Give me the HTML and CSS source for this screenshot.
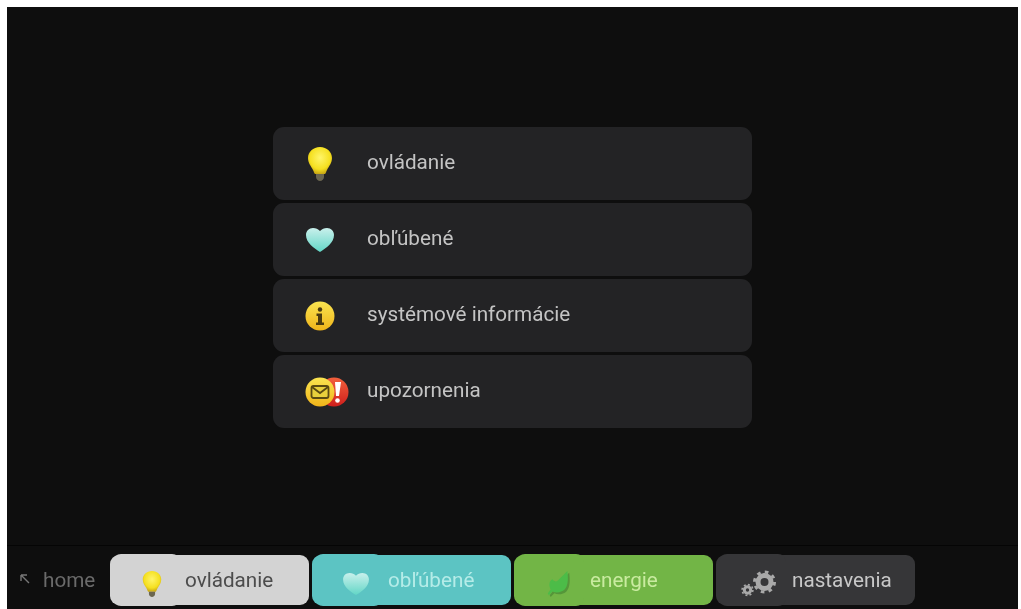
FILE: index.html
```html
<!DOCTYPE html>
<html lang="en">

<head>
    <meta charset="UTF-8">
    <meta name="viewport" content="width=device-width, initial-scale=1.0">
    <link rel="stylesheet" href="styles.css">
    <title>Menu</title>
</head>

<body>
    <svg class="defs" width="0" height="0">
        <defs>
            <radialGradient id="bulbGrad" cx="50%" cy="40%" r="60%">
                <stop offset="0" stop-color="#fff56a" />
                <stop offset="0.7" stop-color="#f5e020" />
                <stop offset="1" stop-color="#c9a814" />
            </radialGradient>
            <linearGradient id="heartGrad" x1="0" y1="0" x2="0" y2="1">
                <stop offset="0" stop-color="#c9f0ec" />
                <stop offset="1" stop-color="#62d6c6" />
            </linearGradient>
            <linearGradient id="coinGrad" x1="0" y1="0" x2="0" y2="1">
                <stop offset="0" stop-color="#fae450" />
                <stop offset="1" stop-color="#f0b41a" />
            </linearGradient>
            <linearGradient id="redGrad" x1="0" y1="0" x2="0" y2="1">
                <stop offset="0" stop-color="#f2603c" />
                <stop offset="1" stop-color="#cf1f1c" />
            </linearGradient>
            <symbol id="bulb" viewBox="0 0 26 36">
                <path d="M13 1C6 1 1 6 1 12c0 5 3 8 5 12 1 2 1 3 2 4h10c1-1 1-2 2-4 2-4 5-7 5-12C25 6 20 1 13 1z" fill="url(#bulbGrad)" />
                <path d="M9 28h8v3c0 2-2 4-4 4s-4-2-4-4z" fill="#6b6650" />
            </symbol>
            <symbol id="heart" viewBox="0 0 30 26">
                <path d="M15 25C9 21 1 16 1 8c0-4 3-7 7-7 3 0 5 1 7 3 2-2 4-3 7-3 4 0 7 3 7 7 0 8-8 13-14 17z" fill="url(#heartGrad)" />
            </symbol>
            <symbol id="leaf" viewBox="0 0 28 32">
                <path d="M23 2c1 8 1 16-3 20-3 3-9 4-13 2l-4 4-1-2 3-4c-2-4-2-9 2-11 2 3 5 3 7 0 3-3 6-6 9-9z" fill="#55963a" transform="translate(2 2)" />
                <path d="M23 2c1 8 1 16-3 20-3 3-9 4-13 2l-4 4-1-2 3-4c-2-4-2-9 2-11 2 3 5 3 7 0 3-3 6-6 9-9z" fill="#4cbc48" />
            </symbol>
            <symbol id="gears" viewBox="0 0 36 28">
                <g fill="none" stroke="#a9a9a9">
                    <circle cx="23" cy="12" r="6.500" stroke-width="5" />
                    <circle cx="23" cy="12" r="10" stroke-width="3" stroke-dasharray="3.600 4.250" />
                    <circle cx="6" cy="20" r="3.200" stroke-width="3" />
                    <circle cx="6" cy="20" r="5.400" stroke-width="1.600" stroke-dasharray="2 2.200" />
                </g>
            </symbol>
        </defs>
    </svg>

    <div class="screen">
        <main class="content">
            <div class="menu">
                <div class="menuitem">
                    <span class="menuicon"><svg class="bulbicon"><use href="#bulb" /></svg></span>
                    <span class="menulabel">ovládanie</span>
                </div>
                <div class="menuitem">
                    <span class="menuicon"><svg class="hearticon"><use href="#heart" /></svg></span>
                    <span class="menulabel">obľúbené</span>
                </div>
                <div class="menuitem">
                    <span class="menuicon">
                        <svg class="infoicon" viewBox="0 0 30 30">
                            <circle cx="15" cy="15" r="14.500" fill="url(#coinGrad)" />
                            <circle cx="15" cy="8.500" r="2.200" fill="#4a3a10" />
                            <path d="M11.500 12.500h5.500v9h2v2.500h-8v-2.500h2v-6.500h-1.500z" fill="#4a3a10" />
                        </svg>
                    </span>
                    <span class="menulabel">systémové informácie</span>
                </div>
                <div class="menuitem menuitem-alert">
                    <span class="menuicon">
                        <svg class="alerticon" viewBox="0 0 44 30">
                            <circle cx="29" cy="15" r="14.500" fill="url(#redGrad)" />
                            <path d="M30 5h6l-2 14h-3z" fill="#fff" />
                            <circle cx="32.500" cy="23.500" r="2.300" fill="#fff" />
                            <circle cx="15" cy="15" r="14.500" fill="url(#coinGrad)" />
                            <rect x="6.500" y="9" width="17" height="12" rx="2" fill="#e8cf3c" stroke="#5b4a12" stroke-width="1.800" />
                            <path d="M7 10l8 6 8-6" fill="none" stroke="#5b4a12" stroke-width="1.800" />
                        </svg>
                    </span>
                    <span class="menulabel">upozornenia</span>
                </div>
            </div>
        </main>

        <nav class="bottombar">
            <div class="home">
                <svg class="homearrow" viewBox="0 0 12 12">
                    <path d="M2 2h6M2 2v6M2 2l8 8" fill="none" stroke="#777" stroke-width="1.400" />
                </svg>
                <span>home</span>
            </div>
            <div class="tab tab-control">
                <svg class="bulbicon-small"><use href="#bulb" /></svg>
                <span>ovládanie</span>
            </div>
            <div class="tab tab-fav">
                <svg class="hearticon-small"><use href="#heart" /></svg>
                <span>obľúbené</span>
            </div>
            <div class="tab tab-energy">
                <svg class="leaficon"><use href="#leaf" /></svg>
                <span>energie</span>
            </div>
            <div class="tab tab-settings">
                <svg class="gearicon"><use href="#gears" /></svg>
                <span>nastavenia</span>
            </div>
        </nav>
    </div>
</body>

</html>
```

FILE: styles.css
```css
* {
    padding: 0;
    margin: 0;
    box-sizing: border-box;
}

html,
body {
    height: 100%;
    overflow: hidden;
}

body {
    background-color: #fff;
    padding: 7px 3px 0 7px;
    font-family: "Roboto", "Liberation Sans", sans-serif;
}

.defs {
    position: absolute;
}

.screen {
    height: 100%;
    background-color: #0e0e0e;
    display: flex;
    flex-direction: column;
}

.content {
    flex: 1;
    padding-top: 120px;
    display: flex;
    justify-content: center;
}

.menu {
    width: 479px;
    display: flex;
    flex-direction: column;
    gap: 3px;
}

.menuitem {
    height: 73px;
    background-color: #232325;
    border-radius: 11px;
    display: flex;
    align-items: center;
    color: #c4c4c4;
    font-size: 20.7px;
    filter: blur(0.6px);
}

.menulabel {
    margin-bottom: 4px;
}

.menuicon {
    width: 94px;
    display: flex;
    justify-content: center;
}

.menuitem-alert .menuicon {
    padding-left: 32px;
    justify-content: flex-start;
}

.bulbicon {
    width: 26px;
    height: 36px;
}

.hearticon {
    width: 30px;
    height: 26px;
}

.infoicon {
    width: 30px;
    height: 30px;
}

.alerticon {
    width: 44px;
    height: 30px;
}

.bottombar {
    height: 64px;
    border-top: 1px solid #050505;
    padding: 9px 0 4px;
    display: flex;
    gap: 3px;
    align-items: stretch;
}

.home {
    width: 100px;
    display: flex;
    align-items: center;
    gap: 12px;
    padding-left: 12px;
    color: #6a6a6a;
    font-size: 20.7px;
    filter: blur(0.6px);
}

.homearrow {
    width: 12px;
    height: 12px;
    margin-bottom: 3px;
}

.tab {
    position: relative;
    width: 199px;
    border-radius: 9px;
    display: flex;
    align-items: center;
    font-size: 20.7px;
    filter: blur(0.6px);
}

/* slightly taller left part of each tab */
.tab::before {
    content: "";
    position: absolute;
    top: -1px;
    bottom: -1px;
    left: 3px;
    width: 67px;
    border-radius: 8px;
    background-color: inherit;
    z-index: -1;
}

.tab-control {
    background-color: #d3d3d3;
    color: #4c4c4c;
    padding-left: 32px;
    gap: 23px;
}

.tab-fav {
    background-color: #5cc4c3;
    color: #b5ece8;
    padding-left: 30px;
    gap: 18px;
}

.tab-energy {
    background-color: #72b546;
    color: #c9eba0;
    padding-left: 32px;
    gap: 18px;
}

.tab-settings {
    background-color: #363638;
    color: #c8c8c8;
    padding-left: 25px;
    gap: 14px;
}

.bulbicon-small {
    width: 20px;
    height: 28px;
    margin-top: 8px;
}

.hearticon-small {
    width: 28px;
    height: 24px;
    margin-top: 7px;
}

.leaficon {
    width: 26px;
    height: 30px;
    margin-top: 8px;
}

.gearicon {
    width: 37px;
    height: 28px;
    margin-top: 7px;
}
```
